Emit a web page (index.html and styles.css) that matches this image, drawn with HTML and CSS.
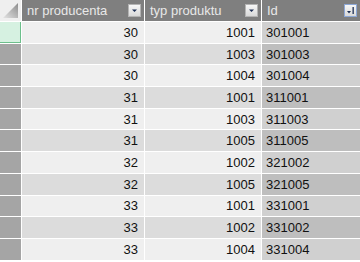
FILE: index.html
```html
<!DOCTYPE html>
<html>
<head>
<meta charset="utf-8">
<link rel="stylesheet" href="styles.css">
</head>
<body>
<div class="grid">
  <div class="corner"><svg width="21" height="21" viewBox="0 0 21 21"><defs><linearGradient id="cg" x1="0" y1="1" x2="1" y2="0"><stop offset="0" stop-color="#e4e4e4"/><stop offset="1" stop-color="#8c8c8c"/></linearGradient></defs><polygon points="3,18 18,3 18,18" fill="url(#cg)"/></svg></div>
  <div class="hd"><span>nr producenta</span><span class="btn"><svg width="13" height="13" viewBox="0 0 13 13"><polygon points="4,5.5 9,5.5 6.5,8" fill="#1d2f55"/></svg></span></div>
  <div class="hd"><span>typ produktu</span><span class="btn"><svg width="13" height="13" viewBox="0 0 13 13"><polygon points="4,5.5 9,5.5 6.5,8" fill="#1d2f55"/></svg></span></div>
  <div class="hd"><span>Id</span><span class="btn sort"><svg width="13" height="13" viewBox="0 0 13 13"><polygon points="3,7 7,7 5,9.5" fill="#1d2f55"/><rect x="8.5" y="3" width="1.3" height="7" fill="#1d2f55"/></svg></span></div>

  <div class="rh sel"></div><div class="c n">30</div><div class="c n">1001</div><div class="c id">301001</div>
  <div class="rh"></div><div class="c n alt">30</div><div class="c n alt">1003</div><div class="c id alt">301003</div>
  <div class="rh"></div><div class="c n">30</div><div class="c n">1004</div><div class="c id">301004</div>
  <div class="rh"></div><div class="c n alt">31</div><div class="c n alt">1001</div><div class="c id alt">311001</div>
  <div class="rh"></div><div class="c n">31</div><div class="c n">1003</div><div class="c id">311003</div>
  <div class="rh"></div><div class="c n alt">31</div><div class="c n alt">1005</div><div class="c id alt">311005</div>
  <div class="rh"></div><div class="c n">32</div><div class="c n">1002</div><div class="c id">321002</div>
  <div class="rh"></div><div class="c n alt">32</div><div class="c n alt">1005</div><div class="c id alt">321005</div>
  <div class="rh"></div><div class="c n">33</div><div class="c n">1001</div><div class="c id">331001</div>
  <div class="rh"></div><div class="c n alt">33</div><div class="c n alt">1002</div><div class="c id alt">331002</div>
  <div class="rh"></div><div class="c n">33</div><div class="c n">1004</div><div class="c id">331004</div>
</div>
</body>
</html>
```
FILE: styles.css
```css
html, body {
  margin: 0;
  padding: 0;
  background: #ffffff;
  overflow: hidden;
}
.grid {
  display: grid;
  grid-template-columns: 21px 122px 116px 98px;
  grid-template-rows: 21px;
  grid-auto-rows: 20.7px;
  gap: 1px;
  width: 360px;
  font-family: "Liberation Sans", Arial, sans-serif;
}
.corner {
  background: #efefef;
  display: flex;
}
.hd {
  background: #7f7f7f;
  color: #e8e8e8;
  font-size: 13px;
  display: flex;
  align-items: center;
  justify-content: space-between;
  padding: 0 3px 0 5px;
}
.btn {
  width: 13px;
  height: 13px;
  box-sizing: border-box;
  border: 1px solid #b4b4b4;
  background: linear-gradient(#f7f7f7, #d9d9d9);
  display: flex;
  align-items: center;
  justify-content: center;
}
.btn svg {
  flex: none;
  margin: -1px;
}
.sort {
  border-color: #8ea8d6;
}
.rh {
  background: #a5a5a5;
}
.rh.sel {
  background: #d6f1e1;
  box-shadow: inset -1px -1px 0 #6cbf8b;
}
.c {
  font-size: 13px;
  color: #111111;
  display: flex;
  align-items: center;
  background: #efefef;
}
.c.alt {
  background: #dcdcdc;
}
.n {
  justify-content: flex-end;
  padding-right: 6px;
}
.id {
  background: #d0d0d0;
  padding-left: 4px;
}
.id.alt {
  background: #bebebe;
}
```
